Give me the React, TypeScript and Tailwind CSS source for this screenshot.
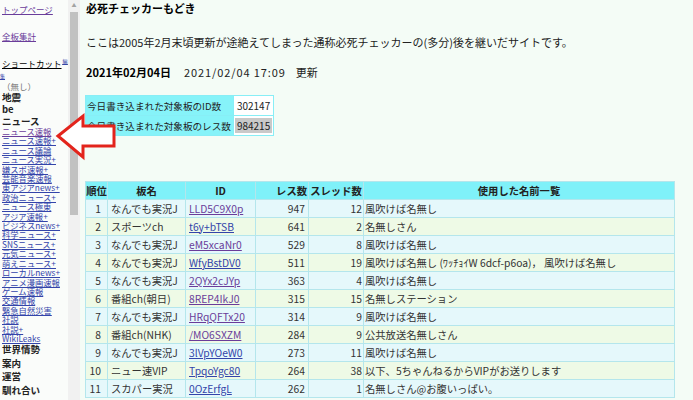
import React from 'react';

/**
 * 必死チェッカーもどき — two-frame layout: board menu on the left,
 * daily ranking on the right, with a red callout arrow over both.
 */

const FONT = { fontFamily: '"Noto Sans CJK JP", "Noto Sans", sans-serif' };

type MenuItem = { label: string; visited?: boolean };

const NEWS_LINKS: MenuItem[] = [
  { label: 'ニュース速報', visited: true },
  { label: 'ニュース速報+' },
  { label: 'ニュース議論' },
  { label: 'ニュース実況+' },
  { label: '嫌スポ速報+' },
  { label: '芸能音楽速報' },
  { label: '東アジアnews+' },
  { label: '政治ニュース+' },
  { label: 'ニュース極東' },
  { label: 'アジア速報+' },
  { label: 'ビジネスnews+' },
  { label: '科学ニュース+' },
  { label: 'SNSニュース+' },
  { label: '元気ニュース+' },
  { label: '萌えニュース+' },
  { label: 'ローカルnews+' },
  { label: 'アニメ漫画速報' },
  { label: 'ゲーム速報' },
  { label: '交通情報' },
  { label: '緊急自然災害' },
  { label: '社説' },
  { label: '社説+' },
  { label: 'WikiLeaks' },
];

type Row = {
  rank: number;
  board: string;
  id: string;
  visited: boolean;
  res: number;
  threads: number;
  names: string;
};

const ROWS: Row[] = [
  { rank: 1, board: 'なんでも実況J', id: 'LLD5C9X0p', visited: true, res: 947, threads: 12, names: '風吹けば名無し' },
  { rank: 2, board: 'スポーツch', id: 't6y+bTSB', visited: false, res: 641, threads: 2, names: '名無しさん' },
  { rank: 3, board: 'なんでも実況J', id: 'eM5xcaNr0', visited: true, res: 529, threads: 8, names: '風吹けば名無し' },
  { rank: 4, board: 'なんでも実況J', id: 'WfyBstDV0', visited: false, res: 511, threads: 19, names: '風吹けば名無し (ﾜｯﾁｮｲW 6dcf-p6oa)， 風吹けば名無し' },
  { rank: 5, board: 'なんでも実況J', id: '2QYx2cJYp', visited: true, res: 363, threads: 4, names: '風吹けば名無し' },
  { rank: 6, board: '番組ch(朝日)', id: '8REP4IkJ0', visited: true, res: 315, threads: 15, names: '名無しステーション' },
  { rank: 7, board: 'なんでも実況J', id: 'HRqQFTx20', visited: true, res: 314, threads: 9, names: '風吹けば名無し' },
  { rank: 8, board: '番組ch(NHK)', id: '/MO6SXZM', visited: true, res: 284, threads: 9, names: '公共放送名無しさん' },
  { rank: 9, board: 'なんでも実況J', id: '3lVpYOeW0', visited: false, res: 273, threads: 11, names: '風吹けば名無し' },
  { rank: 10, board: 'ニュー速VIP', id: 'TpqoYgc80', visited: false, res: 264, threads: 38, names: '以下、5ちゃんねるからVIPがお送りします' },
  { rank: 11, board: 'スカパー実況', id: '0OzErfgL', visited: false, res: 262, threads: 1, names: '名無しさん@お腹いっぱい。' },
];

export default function App() {
  return (
    <div className="relative flex h-[400px] w-[693px] overflow-hidden text-[#222]" style={FONT}>
      <Sidebar />
      <Scrollbar />
      <Main />
      <CalloutArrow />
    </div>
  );
}

function Sidebar() {
  return (
    <div className="w-[68px] shrink-0 overflow-hidden bg-[#fafcfa] pl-[2px] pt-[3px] whitespace-nowrap">
      <a className="block text-[8.5px] leading-[12px] text-[#6a3d9a] underline">トップページ</a>
      <a className="mt-[15px] block text-[8.5px] leading-[12px] text-[#6a3d9a] underline">全板集計</a>
      <div className="mt-[15px] flex items-start text-[8.5px] leading-[12px] text-black underline">
        ショートカット
        <a className="ml-[1px] text-[5px] leading-[8px] text-[#3344aa]">編</a>
      </div>
      <a className="-ml-[2px] mt-[2px] block text-[5px] leading-[9px] text-[#3344aa] underline">集</a>
      <div className="mt-[1px] text-[8.5px] leading-[10px] text-[#777]">（無し）</div>
      <div className="text-[9.5px] font-bold leading-[12px]">地震</div>
      <div className="text-[9.5px] font-bold leading-[12px]">be</div>
      <div className="text-[9.5px] font-bold leading-[12px]">ニュース</div>
      {NEWS_LINKS.map((l) => (
        <a
          key={l.label}
          className={`block text-[8.3px] leading-[9.4px] underline ${l.visited ? 'text-[#6a3d9a]' : 'text-[#3344aa]'}`}
        >
          {l.label}
        </a>
      ))}
      {['世界情勢', '案内', '運営', '馴れ合い'].map((h) => (
        <div key={h} className="text-[9.5px] font-bold leading-[13.5px]">
          {h}
        </div>
      ))}
    </div>
  );
}

function Scrollbar() {
  return (
    <div className="flex w-[12px] shrink-0 flex-col items-center bg-[#f1f1f1]">
      <div className="mt-[2px] text-[5px] leading-[6px] text-[#a3a3a3]">▲</div>
      <div className="mt-[4px] h-[203px] w-[8px] bg-[#c1c1c1]" />
    </div>
  );
}

function Main() {
  return (
    <div className="flex-1 bg-[#f4fcf6] pl-[5px] pt-[1px] text-[11px]">
      <h1 className="pl-[1px] text-[11px] font-bold leading-[14px] text-black">必死チェッカーもどき</h1>
      <p className="mt-[20px] pl-[1px] leading-[14px]">
        ここは2005年2月末頃更新が途絶えてしまった通称必死チェッカーの(多分)後を継いだサイトです。
      </p>
      <div className="mt-[16px] flex pl-[1px] leading-[14px]">
        <span className="font-bold text-black">2021年02月04日</span>
        <span className="ml-[13px] tracking-[0.9px]">2021/02/04 17:09</span>
        <span className="ml-[10px]">更新</span>
      </div>

      <table className="mt-[16px] border-collapse text-[9.6px] leading-[14px]">
        <tbody>
          <tr className="h-[20px]">
            <td className="border border-[#88eef6] bg-[#86f3f9] pl-[1px] pr-[2px]">今日書き込まれた対象板のID数</td>
            <td className="border border-[#88eef6] bg-white pl-[3px] pr-[1px] text-[10px]">302147</td>
          </tr>
          <tr className="h-[20px]">
            <td className="border border-[#88eef6] bg-[#86f3f9] pl-[1px] pr-[2px]">今日書き込まれた対象板のレス数</td>
            <td className="border border-[#88eef6] bg-white pl-[1px] pr-[1px] text-[10px]">
              <span className="bg-[#c9c9c9] px-[2px]">984215</span>
            </td>
          </tr>
        </tbody>
      </table>

      <table className="mt-[45px] w-[590px] table-fixed border-collapse text-[10.3px] leading-[14px] text-[#333]">
        <colgroup>
          <col className="w-[22px]" />
          <col className="w-[78px]" />
          <col className="w-[70px]" />
          <col className="w-[53px]" />
          <col className="w-[55px]" />
          <col />
        </colgroup>
        <thead>
          <tr className="h-[18px] whitespace-nowrap bg-[#7ff1f9] font-bold text-[#222]">
            <th className="overflow-hidden border border-[#b4e6ec] px-0 text-center">順位</th>
            <th className="border border-[#b4e6ec] text-center">板名</th>
            <th className="border border-[#b4e6ec] text-center">ID</th>
            <th className="border border-[#b4e6ec] pr-[1px] text-right">レス数</th>
            <th className="border border-[#b4e6ec] px-0 text-center">スレッド数</th>
            <th className="border border-[#b4e6ec] text-center">使用した名前一覧</th>
          </tr>
        </thead>
        <tbody>
          {ROWS.map((r) => (
            <tr key={r.rank} className={`h-[18px] ${r.rank % 2 ? 'bg-[#e5f8fb]' : 'bg-[#eefae6]'}`}>
              <td className="border border-[#b4e6ec] pr-[6px] text-right">{r.rank}</td>
              <td className="overflow-hidden whitespace-nowrap border border-[#b4e6ec] pl-[3px]">{r.board}</td>
              <td className="border border-[#b4e6ec] pl-[3px]">
                <a className={`underline ${r.visited ? 'text-[#6a3d9a]' : 'text-[#3344aa]'}`}>{r.id}</a>
              </td>
              <td className="border border-[#b4e6ec] pr-[3px] text-right">{r.res}</td>
              <td className="border border-[#b4e6ec] pr-[1px] text-right">{r.threads}</td>
              <td className="whitespace-nowrap border border-[#b4e6ec] pl-[1px]">{r.names}</td>
            </tr>
          ))}
        </tbody>
      </table>
    </div>
  );
}

// Red outline arrow pointing at the ニュース速報 link; sits over both frames.
function CalloutArrow() {
  return (
    <svg className="pointer-events-none absolute left-0 top-0" width="130" height="170" viewBox="0 0 130 170">
      <polygon
        points="58,136 83,116 83,126 114,126 114,146 83,146 83,157"
        fill="white"
        stroke="#e3241c"
        strokeWidth="3"
        strokeLinejoin="miter"
      />
    </svg>
  );
}
